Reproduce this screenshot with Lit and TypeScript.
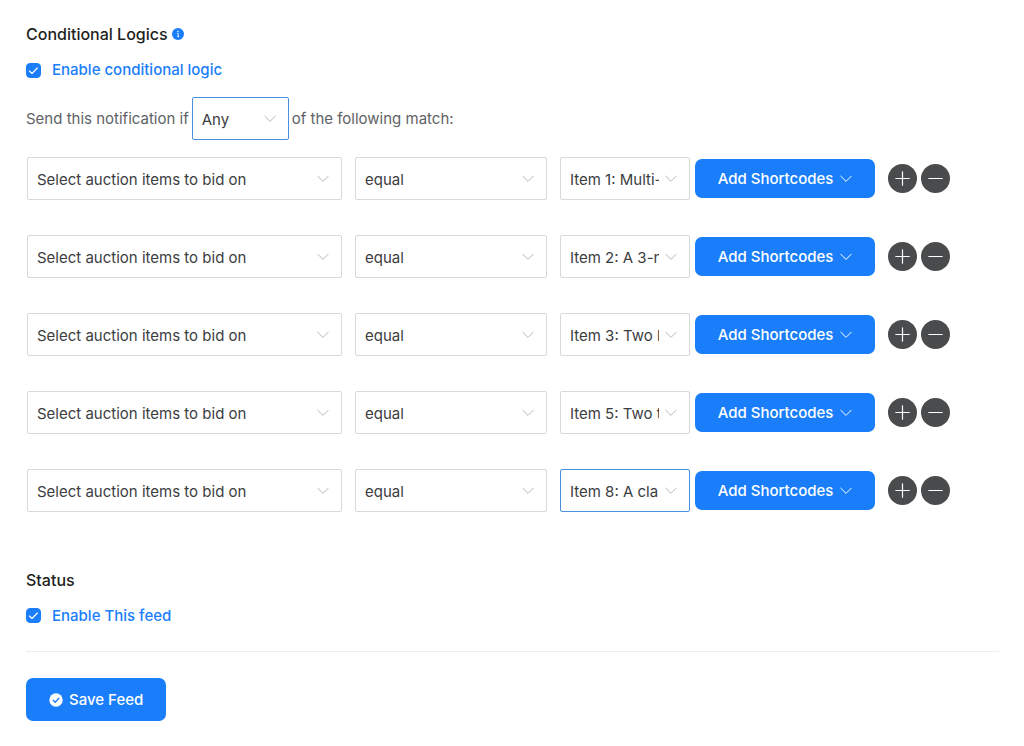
import { LitElement, html, css } from "lit";
import { customElement, property, state } from "lit/decorators.js";
import { classMap } from "lit/directives/class-map.js";

const chevron = html`<svg class="chevron" viewBox="0 0 12 12" aria-hidden="true">
  <path
    d="M0.8 3.2 L6 8.4 L11.2 3.2"
    fill="none"
    stroke="currentColor"
    stroke-width="1"
    stroke-linecap="round"
    stroke-linejoin="round"
  />
</svg>`;

@customElement("select-field")
export class SelectField extends LitElement {
  @property() label = "";
  @property({ type: Array }) options: string[] = [];
  @property({ type: Boolean }) active = false;

  static styles = css`
    :host {
      display: block;
      min-width: 0;
    }
    .field {
      display: grid;
      align-items: center;
    }
    .control {
      grid-area: 1 / 1;
      appearance: none;
      box-sizing: border-box;
      width: 100%;
      height: 43px;
      margin: 0;
      padding: 3px 30px 0 9px;
      border: 1px solid #d8d9db;
      border-radius: 2px;
      outline: none;
      background: #fff;
      color: #3c3d3f;
      font: inherit;
      text-overflow: clip;
    }
    .active {
      border-color: #4a90e2;
    }
    .chevron {
      grid-area: 1 / 1;
      justify-self: end;
      width: 12px;
      height: 12px;
      margin: 2px 13px 0 0;
      color: #b4b8bf;
      pointer-events: none;
    }
  `;

  render() {
    return html`<div class="field">
      <select
        class=${classMap({ control: true, active: this.active })}
        aria-label=${this.label}
      >
        ${this.options.map((o) => html`<option>${o}</option>`)}
      </select>
      ${chevron}
    </div>`;
  }
}

@customElement("check-field")
export class CheckField extends LitElement {
  @property() label = "";

  static styles = css`
    :host {
      display: block;
    }
    .check {
      display: inline-flex;
      align-items: center;
      gap: 11px;
      color: #1a7efb;
      font-weight: 500;
      line-height: 20px;
      cursor: pointer;
    }
    .box {
      display: grid;
    }
    .input {
      grid-area: 1 / 1;
      appearance: none;
      width: 15px;
      height: 15px;
      margin: 0;
      border: 1px solid #1a7efb;
      border-radius: 4px;
      box-sizing: border-box;
    }
    .input:checked {
      background: #1a7efb;
    }
    .tick {
      grid-area: 1 / 1;
      width: 15px;
      height: 15px;
      pointer-events: none;
    }
  `;

  render() {
    return html`<label class="check">
      <span class="box">
        <input class="input" type="checkbox" checked />
        <svg class="tick" viewBox="0 0 15 15" aria-hidden="true">
          <path
            d="M3.4 8 L6 10.5 L11.4 5"
            fill="none"
            stroke="#fff"
            stroke-width="1.1"
            stroke-linecap="round"
            stroke-linejoin="round"
          />
        </svg>
      </span>
      ${this.label}
    </label>`;
  }
}

@customElement("app-root")
export class AppRoot extends LitElement {
  @state() private rows = [
    "Item 1: Multi-course dinner",
    "Item 2: A 3-night stay",
    "Item 3: Two box seats",
    "Item 5: Two tickets",
    "Item 8: A class for two",
  ];

  static styles = css`
    :host {
      display: block;
      box-sizing: border-box;
      padding: 24px 25px 24px 26px;
      background: #fff;
      color: #606266;
      font-family: Inter, "Liberation Sans", sans-serif;
      font-size: 15px;
      line-height: 20px;
    }
    .title {
      display: flex;
      align-items: center;
      gap: 4px;
      margin: 0 0 16px;
      color: #1e1f21;
      font-size: 16px;
      font-weight: 500;
      line-height: 20px;
    }
    .info {
      width: 12px;
      height: 12px;
    }
    .sentence {
      display: flex;
      align-items: center;
      gap: 3px;
      margin: 14px 0 17px;
    }
    .words {
      padding-top: 2px;
    }
    .mode {
      width: 97px;
    }
    .rows {
      display: grid;
      gap: 35px;
      margin: 0 49px 0 1px;
    }
    .row {
      display: grid;
      grid-template-columns: minmax(0, 315fr) minmax(0, 192fr) minmax(0, 130fr) auto;
      gap: 13px;
      align-items: center;
    }
    .actions {
      display: flex;
      align-items: center;
      gap: 4px;
      margin-left: -8px;
    }
    .primary {
      display: flex;
      align-items: center;
      justify-content: center;
      border: 0;
      border-radius: 7px;
      background: #1a7efb;
      color: #fff;
      font: inherit;
      font-weight: 500;
      cursor: pointer;
    }
    .shortcodes {
      width: 180px;
      height: 39px;
      gap: 7px;
      margin-right: 9px;
      padding: 2px 0 0;
    }
    .chevron {
      width: 12px;
      height: 12px;
    }
    .round {
      width: 29px;
      height: 29px;
      padding: 0;
      border: 0;
      border-radius: 50%;
      background: #4a4b4c;
      cursor: pointer;
    }
    .glyph {
      display: block;
      width: 29px;
      height: 29px;
    }
    .status {
      margin-top: 58px;
    }
    .rule {
      height: 1px;
      margin: 23px 0 26px;
      border: 0;
      background: #ececec;
    }
    .save {
      height: 43px;
      gap: 6px;
      padding: 0 23px;
    }
    .done {
      width: 14px;
      height: 14px;
    }
  `;

  private round(label: string, d: string) {
    return html`<button class="round" type="button" aria-label=${label}>
      <svg class="glyph" viewBox="0 0 29 29" aria-hidden="true">
        <path d=${d} stroke="#fff" stroke-width="1.2" stroke-linecap="round" />
      </svg>
    </button>`;
  }

  render() {
    return html`
      <section>
        <h2 class="title">
          Conditional Logics
          <svg class="info" viewBox="0 0 12 12" aria-hidden="true">
            <circle cx="6" cy="6" r="6" fill="#1a7efb" />
            <circle cx="6" cy="3.5" r="0.75" fill="#fff" />
            <path d="M5.2 5.3 H6.2 V8.6 M5.2 8.6 H7.1" fill="none" stroke="#fff" stroke-width="0.9" />
          </svg>
        </h2>
        <check-field label="Enable conditional logic"></check-field>
        <div class="sentence">
          <span class="words">Send this notification if</span>
          <select-field class="mode" label="Match mode" active .options=${["Any", "All"]}></select-field>
          <span class="words">of the following match:</span>
        </div>
        <div class="rows">
          ${this.rows.map(
            (item, i) => html`<div class="row">
              <select-field label="Field" .options=${["Select auction items to bid on"]}></select-field>
              <select-field label="Operator" .options=${["equal", "not equal"]}></select-field>
              <select-field
                label="Value"
                ?active=${i === this.rows.length - 1}
                .options=${[item]}
              ></select-field>
              <div class="actions">
                <button class="primary shortcodes" type="button">Add Shortcodes ${chevron}</button>
                ${this.round("Add condition", "M7.8 14.5 H21.2 M14.5 7.8 V21.2")}
                ${this.round("Remove condition", "M7.8 14.5 H21.2")}
              </div>
            </div>`
          )}
        </div>
      </section>
      <section class="status">
        <h2 class="title">Status</h2>
        <check-field label="Enable This feed"></check-field>
      </section>
      <hr class="rule" />
      <button class="primary save" type="button">
        <svg class="done" viewBox="0 0 14 14" aria-hidden="true">
          <circle cx="7" cy="7" r="6.7" fill="#fff" />
          <path
            d="M4.2 7.2 L6.2 9.2 L9.9 5.3"
            fill="none"
            stroke="#1a7efb"
            stroke-width="1.3"
            stroke-linecap="round"
            stroke-linejoin="round"
          />
        </svg>
        Save Feed
      </button>
    `;
  }
}
